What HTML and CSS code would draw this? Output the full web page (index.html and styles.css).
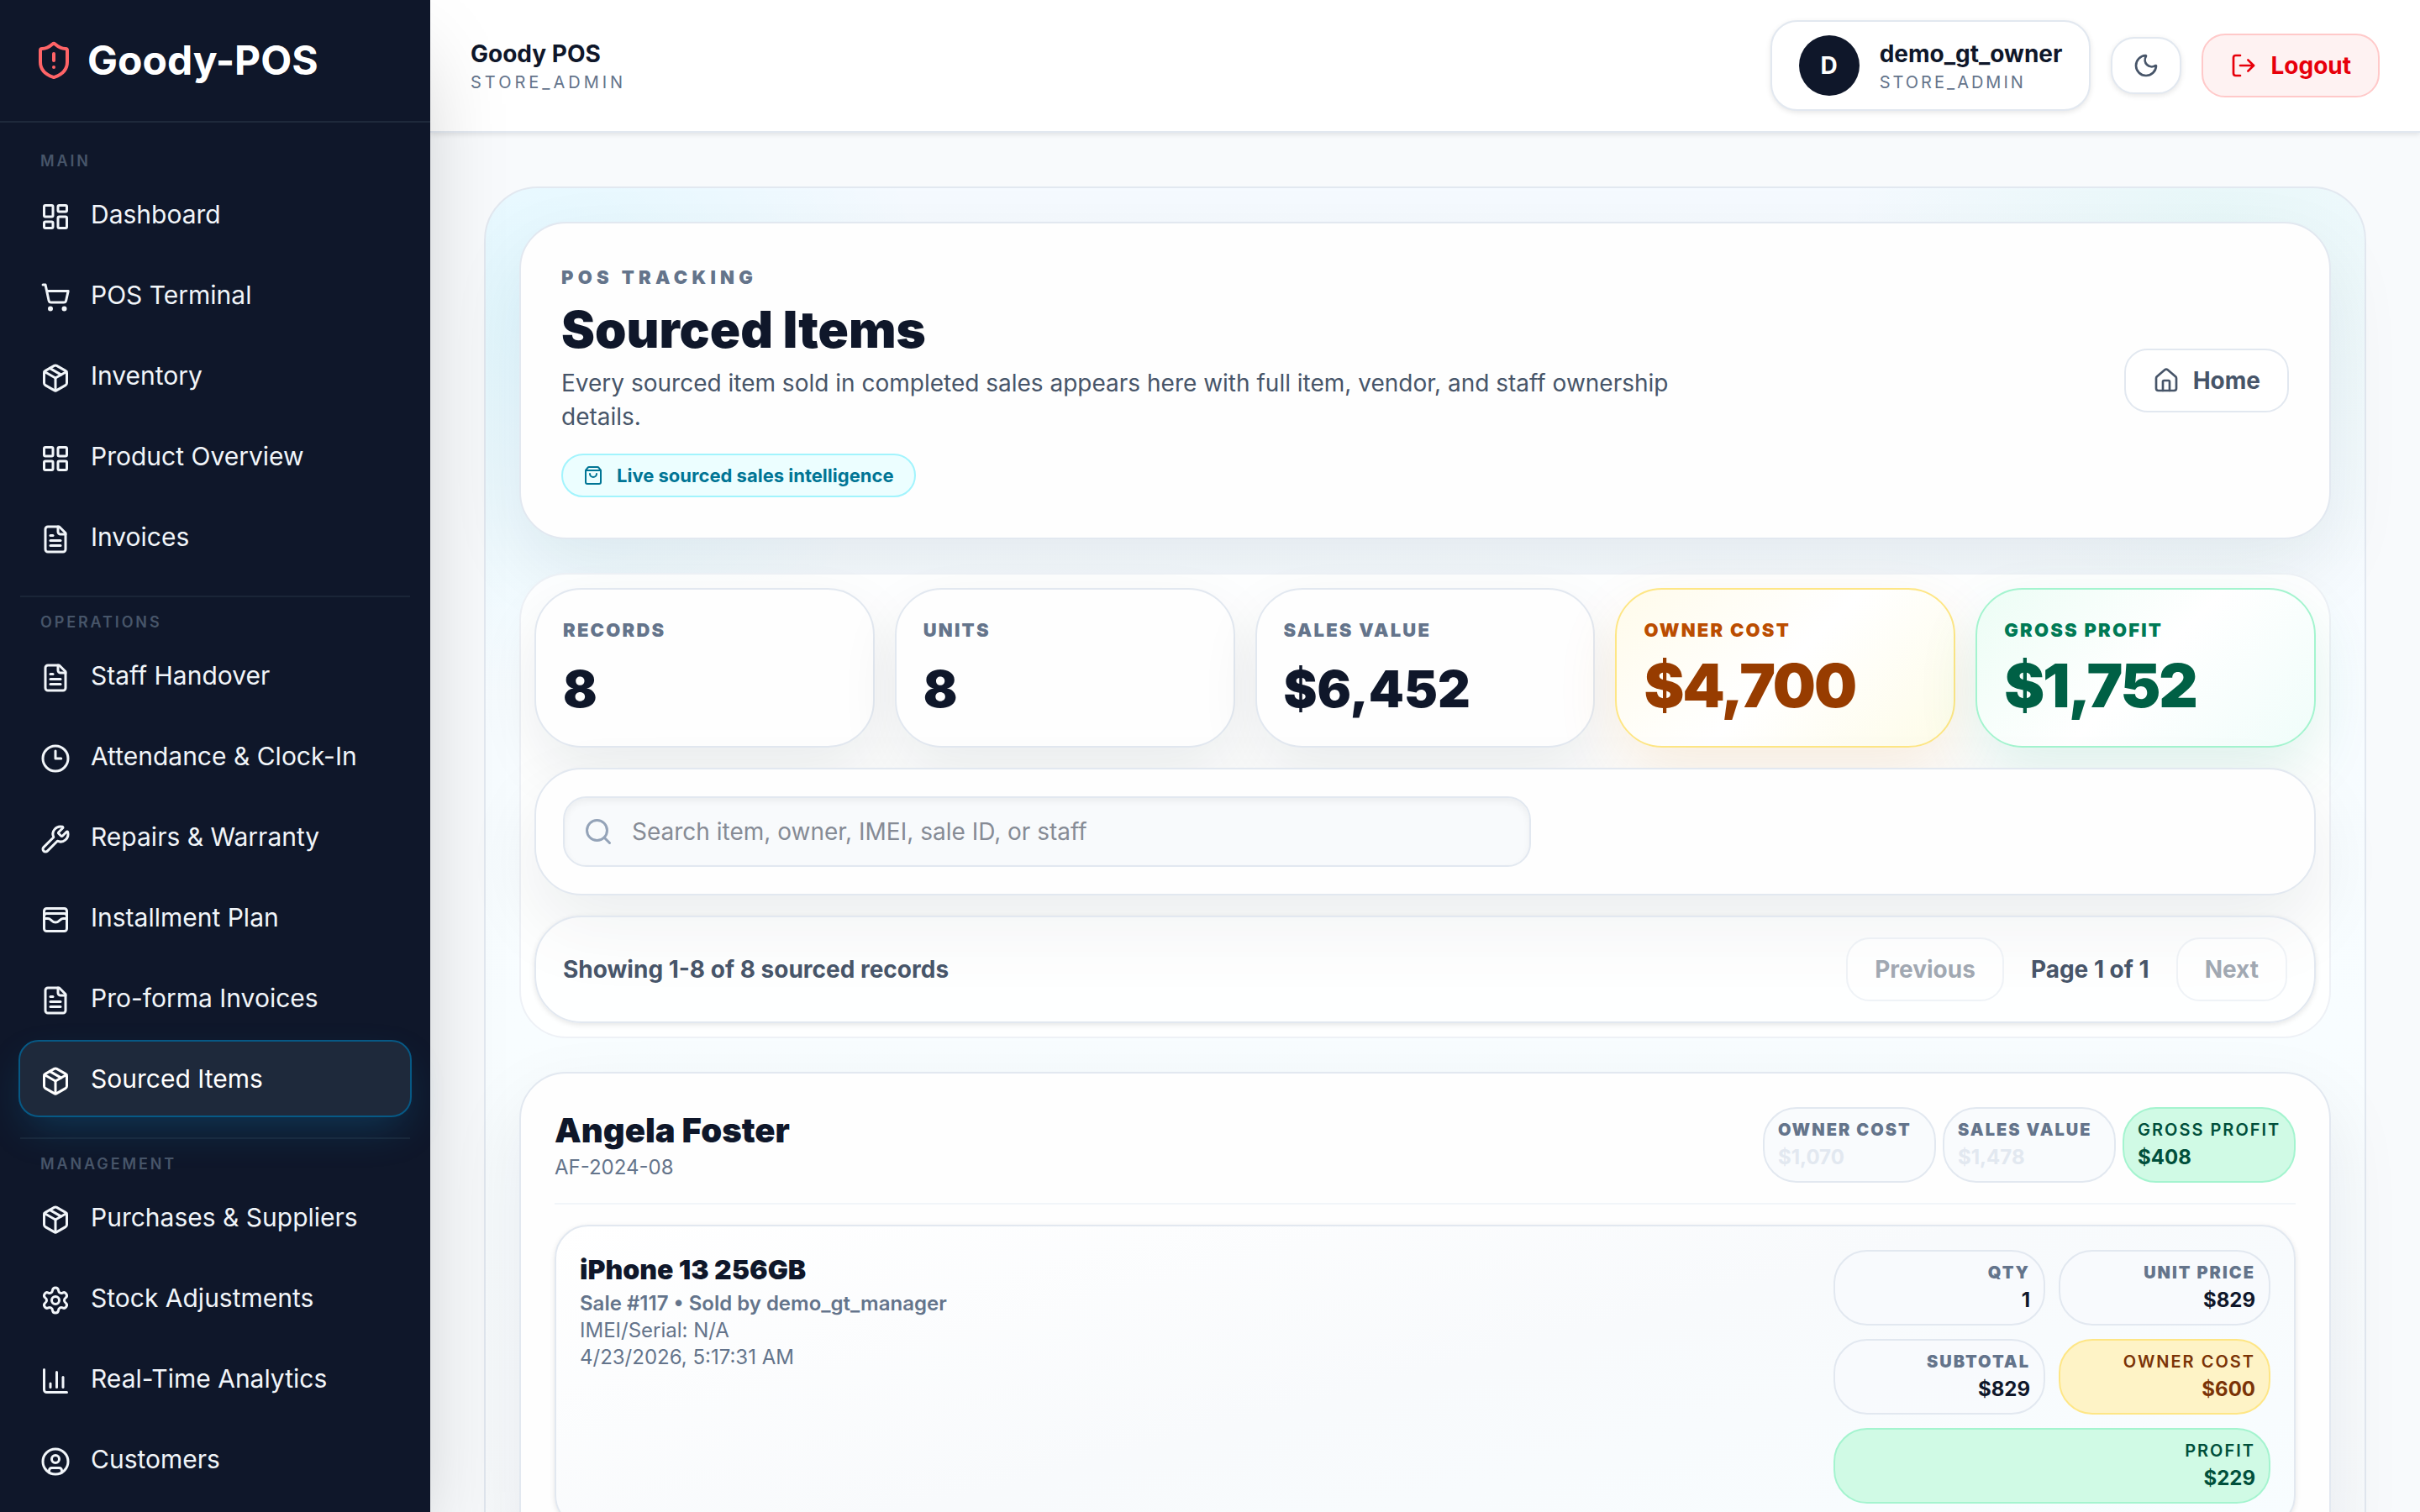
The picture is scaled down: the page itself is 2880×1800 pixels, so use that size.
FILE: index.html
```
<!DOCTYPE html>
<html lang="en">

<head>
  <meta charset="UTF-8">
  <meta name="viewport" content="width=device-width, initial-scale=1.0">
  <title>Goody-POS | Sourced Items</title>
  <link rel="stylesheet" href="styles.css">
</head>

<body>
  <!-- Shared icons -->
  <svg class="sprite" aria-hidden="true">
    <symbol id="i-package" viewBox="0 0 24 24">
      <path d="M11 21.73a2 2 0 0 0 2 0l7-4A2 2 0 0 0 21 16V8a2 2 0 0 0-1-1.73l-7-4a2 2 0 0 0-2 0l-7 4A2 2 0 0 0 3 8v8a2 2 0 0 0 1 1.73z"/>
      <path d="M12 22V12"/>
      <path d="M3.29 7 12 12l8.71-5"/>
      <path d="m7.5 4.27 9 5.15"/>
    </symbol>
    <symbol id="i-file" viewBox="0 0 24 24">
      <path d="M15 2H6a2 2 0 0 0-2 2v16a2 2 0 0 0 2 2h12a2 2 0 0 0 2-2V7Z"/>
      <path d="M14 2v4a2 2 0 0 0 2 2h4"/>
      <path d="M10 9H8"/>
      <path d="M16 13H8"/>
      <path d="M16 17H8"/>
    </symbol>
  </svg>

  <div class="app">
    <aside class="sidebar">
      <div class="brand">
        <svg class="icon icon-lg" viewBox="0 0 24 24">
          <path d="M20 13c0 5-3.5 7.5-7.66 8.95a1 1 0 0 1-.67-.01C7.5 20.5 4 18 4 13V6a1 1 0 0 1 1-1c2 0 4.5-1.2 6.24-2.72a1.17 1.17 0 0 1 1.52 0C14.51 3.81 17 5 19 5a1 1 0 0 1 1 1z"/>
          <path d="M12 8v4"/>
          <path d="M12 16h.01"/>
        </svg>
        <span class="brand-name">Goody-POS</span>
      </div>

      <nav class="nav">
        <div class="nav-group">
          <p class="nav-label">Main</p>
          <a class="nav-link" href="#">
            <svg class="icon" viewBox="0 0 24 24"><rect width="7" height="9" x="3" y="3" rx="1"/><rect width="7" height="5" x="14" y="3" rx="1"/><rect width="7" height="9" x="14" y="12" rx="1"/><rect width="7" height="5" x="3" y="16" rx="1"/></svg>
            <span>Dashboard</span>
          </a>
          <a class="nav-link" href="#">
            <svg class="icon" viewBox="0 0 24 24"><circle cx="8" cy="21" r="1"/><circle cx="19" cy="21" r="1"/><path d="M2.05 2.05h2l2.66 12.42a2 2 0 0 0 2 1.58h9.78a2 2 0 0 0 1.95-1.57l1.65-7.43H5.12"/></svg>
            <span>POS Terminal</span>
          </a>
          <a class="nav-link" href="#">
            <svg class="icon"><use href="#i-package"/></svg>
            <span>Inventory</span>
          </a>
          <a class="nav-link" href="#">
            <svg class="icon" viewBox="0 0 24 24"><rect width="7" height="7" x="3" y="3" rx="1"/><rect width="7" height="7" x="14" y="3" rx="1"/><rect width="7" height="7" x="14" y="14" rx="1"/><rect width="7" height="7" x="3" y="14" rx="1"/></svg>
            <span>Product Overview</span>
          </a>
          <a class="nav-link" href="#">
            <svg class="icon"><use href="#i-file"/></svg>
            <span>Invoices</span>
          </a>
        </div>

        <div class="nav-group">
          <p class="nav-label">Operations</p>
          <a class="nav-link" href="#">
            <svg class="icon"><use href="#i-file"/></svg>
            <span>Staff Handover</span>
          </a>
          <a class="nav-link" href="#">
            <svg class="icon" viewBox="0 0 24 24"><circle cx="12" cy="12" r="10"/><path d="M12 6v6h4.5"/></svg>
            <span>Attendance &amp; Clock-In</span>
          </a>
          <a class="nav-link" href="#">
            <svg class="icon" viewBox="0 0 24 24"><path d="M14.7 6.3a1 1 0 0 0 0 1.4l1.6 1.6a1 1 0 0 0 1.4 0l3.106-3.105c.32-.322.863-.22.983.218a6 6 0 0 1-8.259 7.057l-7.91 7.91a1 1 0 0 1-2.999-3l7.91-7.91a6 6 0 0 1 7.057-8.259c.438.12.54.662.219.984z"/></svg>
            <span>Repairs &amp; Warranty</span>
          </a>
          <a class="nav-link" href="#">
            <svg class="icon" viewBox="0 0 24 24"><rect width="18" height="18" x="3" y="3" rx="2"/><path d="M3 9a2 2 0 0 1 2-2h14a2 2 0 0 1 2 2"/><path d="M3 11h3c.8 0 1.6.3 2.1.9l1.1.9c1.6 1.6 4.1 1.6 5.7 0l1.1-.9c.5-.5 1.3-.9 2.1-.9H21"/></svg>
            <span>Installment Plan</span>
          </a>
          <a class="nav-link" href="#">
            <svg class="icon"><use href="#i-file"/></svg>
            <span>Pro-forma Invoices</span>
          </a>
          <a class="nav-link active" href="#" aria-current="page">
            <svg class="icon"><use href="#i-package"/></svg>
            <span>Sourced Items</span>
          </a>
        </div>

        <div class="nav-group">
          <p class="nav-label">Management</p>
          <a class="nav-link" href="#">
            <svg class="icon"><use href="#i-package"/></svg>
            <span>Purchases &amp; Suppliers</span>
          </a>
          <a class="nav-link" href="#">
            <svg class="icon" viewBox="0 0 24 24"><path d="M9.671 4.136a2.34 2.34 0 0 1 4.659 0 2.34 2.34 0 0 0 3.319 1.915 2.34 2.34 0 0 1 2.33 4.033 2.34 2.34 0 0 0 0 3.831 2.34 2.34 0 0 1-2.33 4.033 2.34 2.34 0 0 0-3.319 1.915 2.34 2.34 0 0 1-4.659 0 2.34 2.34 0 0 0-3.32-1.915 2.34 2.34 0 0 1-2.33-4.033 2.34 2.34 0 0 0 0-3.831A2.34 2.34 0 0 1 6.35 6.051a2.34 2.34 0 0 0 3.319-1.915"/><circle cx="12" cy="12" r="3"/></svg>
            <span>Stock Adjustments</span>
          </a>
          <a class="nav-link" href="#">
            <svg class="icon" viewBox="0 0 24 24"><path d="M3 3v16a2 2 0 0 0 2 2h16"/><path d="M18 17V9"/><path d="M13 17V5"/><path d="M8 17v-3"/></svg>
            <span>Real-Time Analytics</span>
          </a>
          <a class="nav-link" href="#">
            <svg class="icon" viewBox="0 0 24 24"><circle cx="12" cy="12" r="10"/><circle cx="12" cy="10" r="3"/><path d="M7 20.662V19a2 2 0 0 1 2-2h6a2 2 0 0 1 2 2v1.662"/></svg>
            <span>Customers</span>
          </a>
        </div>
      </nav>
    </aside>

    <div class="page">
      <header class="topbar">
        <div class="identity">
          <p class="identity-name">Goody POS</p>
          <p class="identity-role store-role">STORE_ADMIN</p>
        </div>
        <div class="topbar-actions">
          <div class="user-card">
            <span class="avatar">D</span>
            <div class="identity">
              <p class="identity-name">demo_gt_owner</p>
              <p class="identity-role">STORE_ADMIN</p>
            </div>
          </div>
          <button class="theme-toggle" type="button" aria-label="Toggle theme">
            <svg class="icon icon-sm" viewBox="0 0 24 24"><path d="M20.985 12.486a9 9 0 1 1-9.473-9.472c.405-.022.617.46.402.803a6 6 0 0 0 8.268 8.268c.344-.215.825-.004.803.401"/></svg>
          </button>
          <button class="btn btn-danger" type="button">
            <svg class="icon icon-sm" viewBox="0 0 24 24"><path d="m16 17 5-5-5-5"/><path d="M21 12H9"/><path d="M9 21H5a2 2 0 0 1-2-2V5a2 2 0 0 1 2-2h4"/></svg>
            Logout
          </button>
        </div>
      </header>

      <main class="content">
        <div class="panel">
          <section class="hero">
            <div class="hero-text">
              <p class="eyebrow">POS Tracking</p>
              <h1 class="hero-title">Sourced Items</h1>
              <p class="hero-desc">Every sourced item sold in completed sales appears here with full item, vendor, and staff ownership details.</p>
              <span class="pill">
                <svg class="icon icon-xs" viewBox="0 0 24 24"><path d="M16 10a4 4 0 0 1-8 0"/><path d="M3.103 6.034h17.794"/><path d="M3.4 5.467a2 2 0 0 0-.4 1.2V20a2 2 0 0 0 2 2h14a2 2 0 0 0 2-2V6.667a2 2 0 0 0-.4-1.2l-2-2.667A2 2 0 0 0 17 2H7a2 2 0 0 0-1.6.8z"/></svg>
                Live sourced sales intelligence
              </span>
            </div>
            <a class="btn" href="#">
              <svg class="icon icon-sm" viewBox="0 0 24 24"><path d="M15 21v-8a1 1 0 0 0-1-1h-4a1 1 0 0 0-1 1v8"/><path d="M3 10a2 2 0 0 1 .709-1.528l7-6a2 2 0 0 1 2.582 0l7 6A2 2 0 0 1 21 10v9a2 2 0 0 1-2 2H5a2 2 0 0 1-2-2z"/></svg>
              Home
            </a>
          </section>

          <section class="overview">
            <div class="stats">
              <div class="stat">
                <p class="stat-label">Records</p>
                <p class="stat-value">8</p>
              </div>
              <div class="stat">
                <p class="stat-label">Units</p>
                <p class="stat-value">8</p>
              </div>
              <div class="stat">
                <p class="stat-label">Sales Value</p>
                <p class="stat-value">$6,452</p>
              </div>
              <div class="stat stat-cost">
                <p class="stat-label">Owner Cost</p>
                <p class="stat-value">$4,700</p>
              </div>
              <div class="stat stat-profit">
                <p class="stat-label">Gross Profit</p>
                <p class="stat-value">$1,752</p>
              </div>
            </div>

            <div class="search-card">
              <label class="search">
                <svg class="icon" viewBox="0 0 24 24"><path d="m21 21-4.34-4.34"/><circle cx="11" cy="11" r="8"/></svg>
                <input type="text" placeholder="Search item, owner, IMEI, sale ID, or staff" aria-label="Search sourced items">
              </label>
            </div>

            <div class="pager">
              <p>Showing 1-8 of 8 sourced records</p>
              <div class="pager-controls">
                <button class="btn" type="button" disabled>Previous</button>
                <span>Page 1 of 1</span>
                <button class="btn" type="button" disabled>Next</button>
              </div>
            </div>
          </section>

          <section class="owner">
            <div class="owner-header">
              <div>
                <h2 class="owner-name">Angela Foster</h2>
                <p class="owner-id">AF-2024-08</p>
              </div>
              <div class="owner-totals">
                <div class="chip chip-muted">
                  <p class="chip-label">Owner Cost</p>
                  <p class="chip-value">$1,070</p>
                </div>
                <div class="chip chip-muted">
                  <p class="chip-label">Sales Value</p>
                  <p class="chip-value">$1,478</p>
                </div>
                <div class="chip chip-green">
                  <p class="chip-label">Gross Profit</p>
                  <p class="chip-value">$408</p>
                </div>
              </div>
            </div>

            <article class="item">
              <div class="item-info">
                <h3 class="item-title">iPhone 13 256GB</h3>
                <p class="item-sale">Sale #117 • Sold by demo_gt_manager</p>
                <p>IMEI/Serial: N/A</p>
                <p>4/23/2026, 5:17:31 AM</p>
              </div>
              <div class="item-figures">
                <div class="chip">
                  <p class="chip-label">Qty</p>
                  <p class="chip-value">1</p>
                </div>
                <div class="chip">
                  <p class="chip-label">Unit Price</p>
                  <p class="chip-value">$829</p>
                </div>
                <div class="chip">
                  <p class="chip-label">Subtotal</p>
                  <p class="chip-value">$829</p>
                </div>
                <div class="chip chip-amber">
                  <p class="chip-label">Owner Cost</p>
                  <p class="chip-value">$600</p>
                </div>
                <div class="chip chip-green chip-wide">
                  <p class="chip-label">Profit</p>
                  <p class="chip-value">$229</p>
                </div>
              </div>
            </article>
          </section>
        </div>
      </main>
    </div>
  </div>
</body>

</html>
```

FILE: styles.css
```
* {
  margin: 0;
  padding: 0;
  box-sizing: border-box;
}

body {
  font-family: Inter, 'Liberation Sans', sans-serif;
  font-size: 28px;
  line-height: 40px;
  color: #0f172a;
  background: #f8fafc;
}

a {
  color: inherit;
  text-decoration: none;
}

.sprite {
  display: none;
}

.icon {
  width: 36px;
  height: 36px;
  flex-shrink: 0;
  fill: none;
  stroke: currentColor;
  stroke-width: 2;
  stroke-linecap: round;
  stroke-linejoin: round;
}

.icon-lg {
  width: 48px;
  height: 48px;
}

.icon-sm {
  width: 32px;
  height: 32px;
}

.icon-xs {
  width: 24px;
  height: 24px;
}

.app {
  display: flex;
  height: 100vh;
  overflow: hidden;
}

/* Sidebar */
.sidebar {
  position: relative;
  z-index: 2;
  width: 512px;
  flex-shrink: 0;
  background: #0f172a;
  color: #f1f5f9;
  box-shadow: 0 50px 100px -24px rgba(0, 0, 0, 0.25);
}

.brand {
  display: flex;
  align-items: center;
  gap: 16px;
  padding: 40px;
  border-bottom: 2px solid #1e293b;
}

.brand .icon {
  color: #ff6467;
}

.brand-name {
  font-size: 48px;
  line-height: 64px;
  font-weight: 700;
  color: #fff;
}

.nav {
  padding: 30px 24px;
}

.nav-group {
  display: flex;
  flex-direction: column;
  gap: 4px;
}

.nav-group + .nav-group {
  margin-top: 24px;
  padding-top: 14px;
  border-top: 2px solid #1a2537;
}

.nav-label {
  padding: 3px 24px 0;
  font-size: 18px;
  line-height: 26px;
  font-weight: 600;
  letter-spacing: 0.16em;
  text-transform: uppercase;
  color: #475569;
}

.nav-link {
  display: flex;
  align-items: center;
  gap: 24px;
  height: 92px;
  padding: 0 24px;
  border-radius: 24px;
  font-size: 30px;
  font-weight: 400;
}

.nav-link .icon {
  margin-top: 5px;
}

.nav-link.active {
  margin: 0 -2px;
  border: 2px solid #075985;
  background: #1e293b;
  color: #fff;
  box-shadow: 0 20px 50px -12px rgba(14, 165, 233, 0.25);
}

/* Topbar */
.page {
  display: flex;
  flex-direction: column;
  flex: 1;
  min-width: 0;
}

.topbar {
  position: relative;
  z-index: 1;
  display: flex;
  align-items: center;
  justify-content: space-between;
  padding: 24px 48px;
  background: #fff;
  border-bottom: 2px solid #e2e8f0;
  box-shadow: 0 2px 6px rgba(0, 0, 0, 0.1);
}

.topbar-actions {
  display: flex;
  align-items: center;
  gap: 24px;
}

.identity-name {
  font-weight: 700;
  line-height: 40px;
}

.identity-role {
  font-size: 20px;
  line-height: 28px;
  letter-spacing: 0.15em;
  color: #64748b;
}

.store-role {
  letter-spacing: 0.2em;
}

.user-card {
  display: flex;
  align-items: center;
  gap: 24px;
  padding: 16px 32px;
  border: 2px solid #e2e8f0;
  border-radius: 32px;
  background: #fff;
  box-shadow: 0 2px 6px rgba(0, 0, 0, 0.1);
}

.avatar {
  display: flex;
  align-items: center;
  justify-content: center;
  width: 72px;
  height: 72px;
  border-radius: 50%;
  background: #0f172a;
  color: #fff;
  font-weight: 700;
}

.btn {
  display: inline-flex;
  align-items: center;
  gap: 16px;
  padding: 16px 32px;
  border: 2px solid #e2e8f0;
  border-radius: 28px;
  background: #fff;
  color: #475569;
  font: inherit;
  font-weight: 700;
}

.btn:disabled {
  opacity: 0.5;
}

.btn-danger {
  border-color: #ffc9c9;
  background: #fef2f2;
  color: #e7000b;
}

.theme-toggle {
  display: flex;
  padding: 16px 24px;
  border: 2px solid #e2e8f0;
  border-radius: 28px;
  background: #fff;
  color: #475569;
  box-shadow: 0 2px 6px rgba(0, 0, 0, 0.1);
}

/* Content */
.content {
  flex: 1;
  padding: 64px;
  overflow-y: auto;
  scrollbar-width: none;
}

.panel {
  display: flex;
  flex-direction: column;
  gap: 40px;
  padding: 40px;
  border: 2px solid #e2e8f0;
  border-radius: 64px;
  background:
    radial-gradient(circle at 3% 9%, rgba(0, 220, 255, 0.08), transparent 460px),
    radial-gradient(circle at 92% 3%, rgba(16, 205, 150, 0.06), transparent 440px),
    linear-gradient(180deg, #f5faff, #f8fdff 60%, #f8fafc);
}

.hero {
  display: flex;
  align-items: center;
  justify-content: space-between;
  padding: 48px;
  border: 2px solid #e2e8f0;
  border-radius: 56px;
  background: #fefefe;
  box-shadow: 0 36px 90px rgba(15, 23, 42, 0.08);
}

.hero-text {
  max-width: 1344px;
}

.eyebrow {
  font-size: 22px;
  line-height: 32px;
  font-weight: 900;
  letter-spacing: 0.24em;
  text-transform: uppercase;
  color: #64748b;
}

.hero-title {
  margin-top: 10px;
  font-size: 60px;
  line-height: 72px;
  font-weight: 900;
}

.hero-desc {
  margin-top: 8px;
  color: #475569;
}

.pill {
  display: inline-flex;
  align-items: center;
  gap: 16px;
  margin-top: 24px;
  padding: 8px 24px;
  border: 2px solid #a2f4fd;
  border-radius: 26px;
  background: #ecfeff;
  color: #007595;
  font-size: 22px;
  line-height: 32px;
  font-weight: 700;
}

.overview {
  display: flex;
  flex-direction: column;
  gap: 24px;
  padding: 16px;
  border: 2px solid rgba(226, 232, 240, 0.6);
  border-radius: 56px;
  background: rgba(255, 255, 255, 0.85);
}

.stats {
  display: grid;
  grid-template-columns: repeat(5, 1fr);
  gap: 24px;
}

.stat {
  padding: 32px;
  border: 2px solid #e2e8f0;
  border-radius: 56px;
  background: #fefefe;
  box-shadow: 0 28px 70px rgba(15, 23, 42, 0.08);
}

.stat-label {
  font-size: 22px;
  line-height: 32px;
  font-weight: 900;
  letter-spacing: 0.1em;
  text-transform: uppercase;
  color: #64748b;
}

.stat-value {
  margin-top: 18px;
  font-size: 60px;
  line-height: 72px;
  font-weight: 900;
}

.stat-cost {
  border-color: #fee685;
  background: linear-gradient(135deg, #fffbeb, #fff 50%, #fefce8);
  box-shadow: 0 28px 70px rgba(217, 119, 6, 0.12);
}

.stat-profit {
  border-color: #a4f4cf;
  background: linear-gradient(135deg, #ecfdf5, #fff 50%, #f0fdfa);
  box-shadow: 0 28px 70px rgba(5, 150, 105, 0.12);
}

.stat-cost .stat-value,
.stat-profit .stat-value {
  margin-top: 10px;
  font-size: 72px;
  line-height: 80px;
  letter-spacing: -0.03em;
}

.stat-cost .stat-label {
  color: #bb4d00;
}

.stat-cost .stat-value {
  color: #973c00;
}

.stat-profit .stat-label {
  color: #007a55;
}

.stat-profit .stat-value {
  color: #006045;
}

.search-card {
  padding: 32px;
  border: 2px solid #e2e8f0;
  border-radius: 56px;
  background: #fefefe;
  box-shadow: 0 36px 90px rgba(15, 23, 42, 0.08);
}

.search {
  display: flex;
  align-items: center;
  gap: 22px;
  max-width: 1152px;
  height: 84px;
  padding: 0 22px;
  border: 2px solid #e2e8f0;
  border-radius: 28px;
  background: #f8fafc;
  box-shadow: inset 0 4px 8px rgba(0, 0, 0, 0.05);
}

.search .icon {
  color: #94a3b8;
}

.search input {
  flex: 1;
  border: none;
  outline: none;
  background: none;
  font: inherit;
}

.search input::placeholder {
  color: #868b95;
}

.pager {
  display: flex;
  align-items: center;
  justify-content: space-between;
  padding: 24px 32px;
  border: 2px solid #e2e8f0;
  border-radius: 56px;
  background: rgba(255, 255, 255, 0.3);
  box-shadow: 0 2px 6px rgba(0, 0, 0, 0.1);
  color: #475569;
  font-weight: 700;
}

.pager-controls {
  display: flex;
  align-items: center;
  gap: 32px;
}

/* Owner group */
.owner {
  display: flex;
  flex-direction: column;
  gap: 24px;
  padding: 40px;
  border: 2px solid #e2e8f0;
  border-radius: 56px;
  background: #fefefe;
  box-shadow: 0 36px 90px rgba(15, 23, 42, 0.08);
}

.owner-header {
  display: flex;
  justify-content: space-between;
  padding-bottom: 24px;
  border-bottom: 2px solid #f1f5f9;
}

.owner-name {
  font-size: 40px;
  line-height: 56px;
  font-weight: 900;
}

.owner-id {
  font-size: 24px;
  line-height: 32px;
  color: #64748b;
}

.owner-totals {
  display: grid;
  grid-template-columns: repeat(3, 206px);
  gap: 8px;
}

.chip {
  padding: 12px 16px;
  border: 2px solid #e2e8f0;
  border-radius: 40px;
  background: rgba(248, 250, 252, 0.8);
}

.chip-label {
  font-size: 20px;
  line-height: 26px;
  font-weight: 900;
  letter-spacing: 0.1em;
  text-transform: uppercase;
  white-space: nowrap;
  color: #64748b;
}

.chip-value {
  margin-top: 4px;
  font-size: 24px;
  line-height: 32px;
  font-weight: 700;
}

.chip-muted .chip-value {
  color: #e2e8f0;
}

.chip-green {
  border-color: #a4f4cf;
  background: #d0fae5;
  color: #004f3b;
}

.chip-amber {
  border-color: #fee685;
  background: #fef3c6;
  color: #7b3306;
}

.chip-green .chip-label,
.chip-amber .chip-label {
  font-weight: 600;
  color: inherit;
}

.item {
  display: flex;
  justify-content: space-between;
  padding: 28px;
  border: 2px solid #e2e8f0;
  border-radius: 40px;
  background: linear-gradient(165deg, #fff, #f8fafc 50%, #f8fdff);
  box-shadow: 0 2px 6px rgba(0, 0, 0, 0.1);
}

.item-info {
  font-size: 24px;
  line-height: 32px;
  color: #64748b;
}

.item-title {
  font-size: 32px;
  line-height: 48px;
  font-weight: 900;
  color: #0f172a;
}

.item-sale {
  font-weight: 600;
}

.item-figures {
  display: grid;
  grid-template-columns: 1fr 1fr;
  gap: 16px;
  width: 520px;
  text-align: right;
}

.chip-wide {
  grid-column: 1 / -1;
}
```
